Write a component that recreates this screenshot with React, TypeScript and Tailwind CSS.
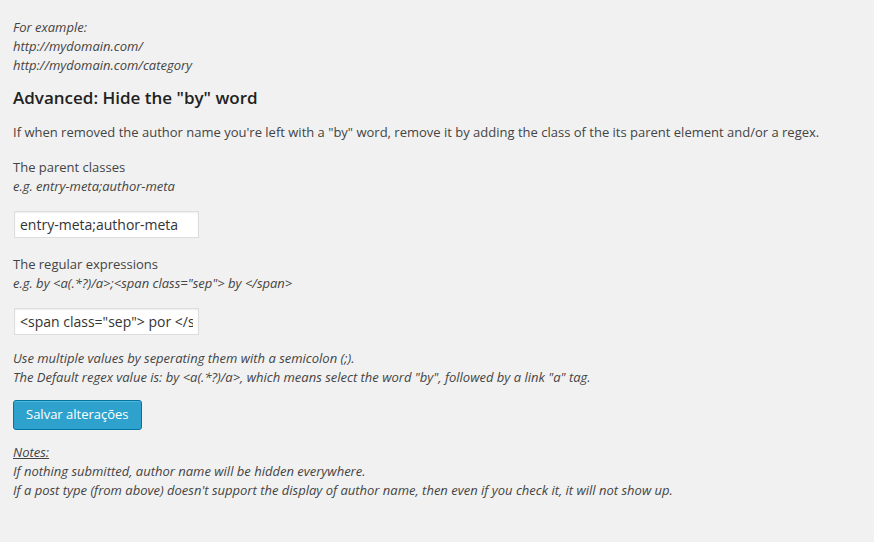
import React from 'react'

export default function App() {
  return (
    <div className="min-h-[542px] w-[874px] bg-[#f1f1f1] text-[#444] text-[13px] leading-[19px] font-['Open_Sans',sans-serif] px-[13px] pt-[18px]">
      <p className="italic">
        For example:
        <br />
        http://mydomain.com/
        <br />
        http://mydomain.com/category
      </p>

      <h3 className="mt-[11px] text-[17px] leading-[24px] font-semibold text-[#222]">
        Advanced: Hide the "by" word
      </h3>

      <p className="mt-[13px]">
        If when removed the author name you're left with a "by" word, remove it by adding the class of the its parent element and/or a regex.
      </p>

      <div className="mt-[16px]">
        <div>The parent classes</div>
        <div className="italic">e.g. entry-meta;author-meta</div>
        <input
          type="text"
          defaultValue="entry-meta;author-meta"
          className="mt-[15px] ml-px block w-[185px] h-[27px] px-[5px] bg-white border border-[#ddd] shadow-[inset_0_1px_2px_rgba(0,0,0,0.07)] text-[14px] text-[#333] outline-none"
        />
      </div>

      <div className="mt-[17px]">
        <div>The regular expressions</div>
        <div className="italic">e.g. by &lt;a(.*?)/a&gt;;&lt;span class="sep"&gt; by &lt;/span&gt;</div>
        <input
          type="text"
          defaultValue={'<span class="sep"> por </span>'}
          className="mt-[15px] ml-px block w-[185px] h-[27px] px-[5px] bg-white border border-[#ddd] shadow-[inset_0_1px_2px_rgba(0,0,0,0.07)] text-[14px] text-[#333] outline-none"
        />
      </div>

      <p className="mt-[14px] italic">
        Use multiple values by seperating them with a semicolon (;).
        <br />
        The Default regex value is: by &lt;a(.*?)/a&gt;, which means select the word "by", followed by a link "a" tag.
      </p>

      <button className="mt-[13px] h-[30px] px-[12px] pb-[2px] rounded-[3px] bg-[#2ea2cc] border border-[#0074a2] shadow-[inset_0_1px_0_rgba(120,200,230,0.5)] text-white text-[13px] leading-[26px]">
        Salvar alterações
      </button>

      <p className="mt-[13px] italic">
        <span className="underline">Notes:</span>
        <br />
        If nothing submitted, author name will be hidden everywhere.
        <br />
        If a post type (from above) doesn't support the display of author name, then even if you check it, it will not show up.
      </p>
    </div>
  )
}
